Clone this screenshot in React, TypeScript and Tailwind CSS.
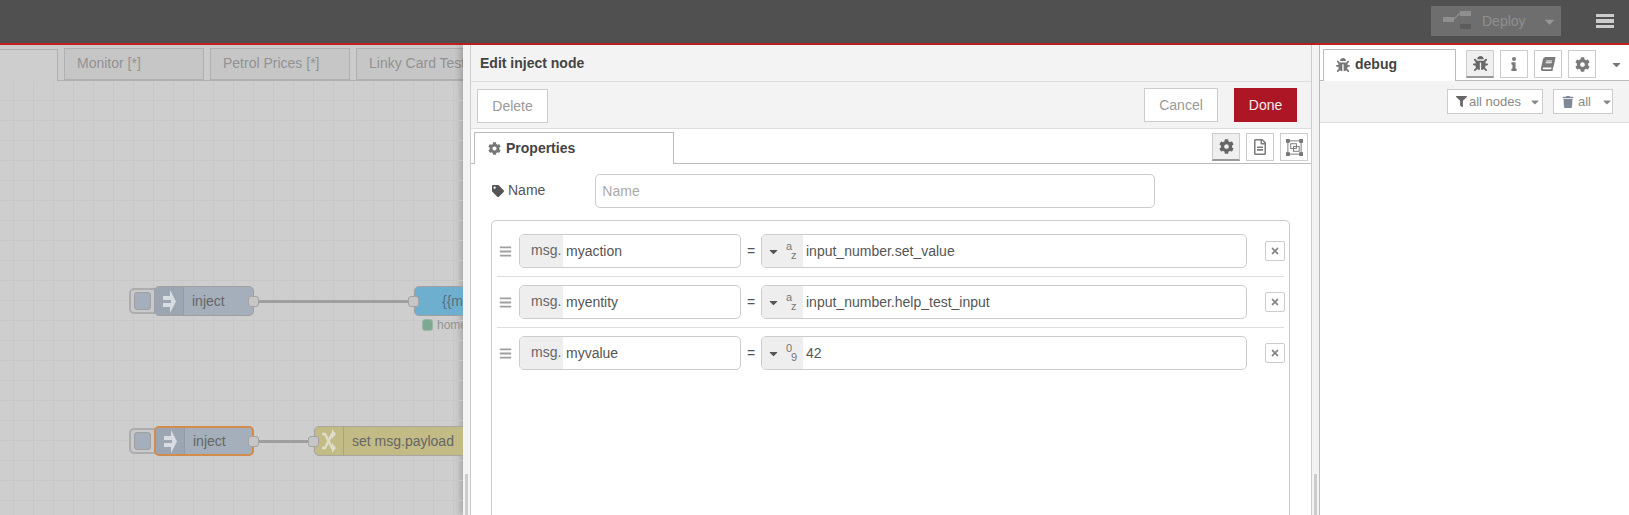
import React from 'react';
import { FaBars, FaBook, FaBug, FaCaretDown, FaCog, FaFilter, FaInfo, FaRegFileAlt, FaTag, FaTimes, FaTrash } from 'react-icons/fa';

const font = "font-['Liberation_Sans',Arial,sans-serif]";

const InjectIcon = () => (
  <svg viewBox="0 0 13 23" className="w-[13px] h-[23px]" fill="#d9dde1">
    <path d="M0 6H7V0L13 11.5 7 23V17H0V13H8V10H0Z" />
  </svg>
);

const SwapIcon = () => (
  <svg viewBox="0 0 14 24" className="w-[14px] h-[24px]" fill="#dedccb">
    <path d="M0 5h3l7 14h2M0 19h3l7-14h2" stroke="#dedccb" strokeWidth="2.4" fill="none" />
    <path d="M10 0l4 5-4 5zM10 14l4 5-4 5z" />
  </svg>
);

const GroupIcon = () => (
  <svg viewBox="0 0 18 18" className="w-[17px] h-[17px]" fill="none" stroke="#777777" strokeWidth="1">
    <rect x="2" y="2" width="14" height="14" />
    <rect x="5" y="5" width="6" height="5" />
    <rect x="8" y="8" width="6" height="5" />
    <rect x="0.5" y="0.5" width="3" height="3" fill="#777777" />
    <rect x="14.5" y="0.5" width="3" height="3" fill="#777777" />
    <rect x="0.5" y="14.5" width="3" height="3" fill="#777777" />
    <rect x="14.5" y="14.5" width="3" height="3" fill="#777777" />
  </svg>
);

const CanvasTab = ({ label }: { label: string }) => (
  <div className="w-[140px] h-[32px] ml-[6px] bg-[#c6c6c6] border border-[#b0b0b0] pl-[12px] leading-[29px] text-[14px] text-[#929292] whitespace-nowrap overflow-hidden shrink-0">
    {label}
  </div>
);

const Port = ({ className }: { className: string }) => (
  <div className={`absolute w-[11px] h-[11px] bg-[#c6c6c6] border border-[#a3a3a3] rounded-[3px] ${className}`} />
);

const Wire = ({ className }: { className: string }) => (
  <div className={`absolute h-[3px] bg-[#9f9f9f] ${className}`} />
);

const InjectNode = ({ top, selected }: { top: string; selected?: boolean }) => (
  <div className={`absolute left-[129px] ${top} w-[130px] h-[30px]`}>
    <div className="absolute left-0 top-[2px] w-[30px] h-[26px] bg-[#c9c9c9] border-2 border-[#adadad] rounded-[5px] pl-[3px] pt-[2px]">
      <div className="w-[17px] h-[18px] bg-[#a4afbb] border border-[#a0a0a0] rounded-[3px]" />
    </div>
    <div className={`absolute left-[25px] top-0 w-[100px] h-[30px] bg-[#a4afbb] rounded-[5px] flex items-center ${selected ? 'border-2 border-[#d18b4b]' : 'border border-[#a0a0a0]'}`}>
      <div className="w-[29px] h-full bg-[#9ca6b2] border-r border-[#929ba6] rounded-l-[4px] flex items-center justify-center shrink-0">
        <InjectIcon />
      </div>
      <span className="ml-[8px] text-[14px] text-[#666666]">inject</span>
    </div>
    <Port className="left-[119px] top-[10px]" />
  </div>
);

const Canvas = () => (
  <div className="w-[463px] shrink-0 h-full flex flex-col overflow-hidden bg-[#cecece]">
    <div className="h-[36px] shrink-0 flex items-end border-b border-[#b0b0b0] bg-[#cbcbcb]">
      <div className="w-[58px] h-[32px] -mb-px bg-[#cecece] border-t border-r border-[#b0b0b0] shrink-0" />
      <CanvasTab label="Monitor [*]" />
      <CanvasTab label="Petrol Prices [*]" />
      <CanvasTab label="Linky Card Test" />
    </div>
    <div className="relative flex-1 bg-[linear-gradient(to_right,#c7c7c7_1px,transparent_1px),linear-gradient(to_bottom,#c7c7c7_1px,transparent_1px)] bg-[size:20px_20px] bg-[position:13px_19px]">
      <Wire className="left-[259px] top-[219px] w-[155px]" />
      <Wire className="left-[259px] top-[359px] w-[55px]" />
      <InjectNode top="top-[205px]" />
      <InjectNode top="top-[345px]" selected />
      <div className="absolute left-[414px] top-[205px] w-[100px] h-[30px] bg-[#6eafd0] border border-[#a0a0a0] rounded-[5px] pl-[27px] leading-[28px] text-[14px] text-[#55707f]">
        {'{{msg'}
      </div>
      <Port className="left-[408px] top-[215px]" />
      <div className="absolute left-[422px] top-[238px] w-[11px] h-[12px] bg-[#7fa893] border border-[#9bb9a9] rounded-[3px]" />
      <span className="absolute left-[437px] top-[236px] text-[12px] leading-[16px] text-[#929292]">home</span>
      <div className="absolute left-[314px] top-[345px] w-[200px] h-[30px] bg-[#c2bb85] border border-[#a8a8a0] rounded-[5px] flex items-center">
        <div className="w-[29px] h-full border-r border-[#aaa474] flex items-center justify-center shrink-0">
          <SwapIcon />
        </div>
        <span className="ml-[8px] text-[14px] text-[#666666] whitespace-nowrap">set msg.payload</span>
      </div>
      <Port className="left-[308px] top-[355px]" />
    </div>
  </div>
);

const ToolButton = ({ active, children }: { active?: boolean; children: React.ReactNode }) => (
  <div className={`w-[28px] h-[28px] border flex items-center justify-center text-[#7a7a7a] text-[14px] shrink-0 ${active ? 'bg-[#efefef] border-[#cccccc] border-b-[#999999] border-b-2 text-[#666666]' : 'bg-white border-[#cccccc]'}`}>
    {children}
  </div>
);

const PropertyRow = ({ name, type, value, last }: { name: string; type: 'str' | 'num'; value: string; last?: boolean }) => (
  <div className={`mx-[5px] py-[8px] flex items-center ${last ? '' : 'border-b border-[#dddddd]'}`}>
    <FaBars className="ml-[2px] mr-[7px] w-[13px] text-[13px] text-[#a0a0a0] shrink-0" />
    <div className="w-[222px] h-[34px] border border-[#cccccc] rounded-[5px] flex overflow-hidden shrink-0">
      <div className="w-[43px] bg-[#eeeeee] pl-[11px] leading-[30px] text-[14px] text-[#666666]">msg.</div>
      <div className="pl-[3px] leading-[33px] text-[14px] text-[#555555]">{name}</div>
    </div>
    <div className="w-[20px] text-center text-[14px] text-[#555555] shrink-0">=</div>
    <div className="w-[486px] h-[34px] border border-[#cccccc] rounded-[5px] flex overflow-hidden shrink-0">
      <div className="w-[41px] bg-[#eeeeee] flex items-center pl-[5px] shrink-0">
        <FaCaretDown className="text-[13px] text-[#555555]" />
        <div className="ml-[6px] w-[12px] text-[11px] leading-[9px] text-[#777777]">
          <div>{type === 'str' ? 'a' : '0'}</div>
          <div className="pl-[5px]">{type === 'str' ? 'z' : '9'}</div>
        </div>
      </div>
      <div className="pl-[3px] leading-[33px] text-[14px] text-[#555555]">{value}</div>
    </div>
    <div className="ml-[18px] w-[20px] h-[20px] border border-[#cccccc] rounded-[2px] flex items-center justify-center shrink-0">
      <FaTimes className="text-[10px] text-[#888888]" />
    </div>
  </div>
);

const EditTray = () => (
  <div className="w-[856px] shrink-0 h-full flex bg-[#f3f3f3] shadow-[-3px_0_6px_rgba(0,0,0,0.18)]">
    <div className="w-[7px] shrink-0 flex flex-col justify-end items-center">
      <div className="w-[3px] h-[41px] bg-[#cccccc]" />
    </div>
    <div className="flex-1 min-w-0 border-x border-[#cccccc] flex flex-col">
      <div className="h-[37px] shrink-0 border-b border-[#dddddd] pl-[9px] leading-[36px] text-[14px] font-bold text-[#444444]">
        Edit inject node
      </div>
      <div className="h-[47px] shrink-0 border-b border-[#dddddd] flex items-start pl-[6px] pr-[14px] pt-[6px]">
        <div className="mt-px w-[71px] h-[34px] bg-white border border-[#cccccc] text-center leading-[32px] text-[14px] text-[#999999]">Delete</div>
        <div className="ml-auto w-[74px] h-[34px] bg-white border border-[#cccccc] text-center leading-[32px] text-[14px] text-[#999999]">Cancel</div>
        <div className="ml-[16px] w-[63px] h-[34px] bg-[#ad1625] text-center leading-[34px] text-[14px] text-[#eeeeee]">Done</div>
      </div>
      <div className="flex-1 min-h-0 bg-white flex flex-col overflow-hidden">
        <div className="h-[35px] shrink-0 border-b border-[#bbbbbb] flex items-start pl-[3px] pr-[3px]">
          <div className="mt-[3px] w-[200px] h-[32px] bg-white border border-b-0 border-[#bbbbbb] pl-[13px] flex items-center gap-[5px] text-[14px] font-bold text-[#444444]">
            <FaCog className="text-[13px] text-[#777777]" />
            Properties
          </div>
          <div className="ml-auto mt-[4px] flex gap-[6px]">
            <ToolButton active><FaCog className="text-[15px]" /></ToolButton>
            <ToolButton><FaRegFileAlt className="text-[16px]" /></ToolButton>
            <ToolButton><GroupIcon /></ToolButton>
          </div>
        </div>
        <div className="pl-[20px] pr-[21px] pt-[10px]">
          <div className="flex items-center h-[34px]">
            <FaTag className="text-[12px] text-[#555555] ml-px" />
            <span className="ml-[4px] text-[14px] text-[#555555] -mt-[2px]">Name</span>
            <div className="ml-[50px] w-[560px] h-[34px] border border-[#cccccc] rounded-[5px] bg-white pl-[6px] leading-[33px] text-[14px] text-[#aaaaaa]">Name</div>
          </div>
          <div className="mt-[12px] h-[400px] border border-[#cccccc] rounded-[5px] pt-[5px]">
            <PropertyRow name="myaction" type="str" value="input_number.set_value" />
            <PropertyRow name="myentity" type="str" value="input_number.help_test_input" />
            <PropertyRow name="myvalue" type="num" value="42" last />
          </div>
        </div>
      </div>
    </div>
    <div className="w-[7px] shrink-0 flex flex-col justify-end items-center">
      <div className="w-[3px] h-[41px] bg-[#cccccc]" />
    </div>
  </div>
);

const Sidebar = () => (
  <div className="flex-1 min-w-0 h-full border-l border-[#bbbbbb] bg-white flex flex-col">
    <div className="h-[36px] shrink-0 border-b border-[#bbbbbb] flex items-start pl-[3px]">
      <div className="mt-[4px] w-[133px] h-[32px] bg-white border border-b-0 border-[#bbbbbb] pl-[12px] pb-[2px] flex items-center gap-[5px] text-[14px] font-bold text-[#444444] shrink-0">
        <FaBug className="text-[14px] text-[#777777]" />
        debug
      </div>
      <div className="ml-[10px] mt-[5px] flex gap-[6px]">
        <ToolButton active><FaBug className="text-[15px]" /></ToolButton>
        <ToolButton><FaInfo /></ToolButton>
        <ToolButton><FaBook className="-skew-x-12" /></ToolButton>
        <ToolButton><FaCog className="text-[15px]" /></ToolButton>
      </div>
      <FaCaretDown className="ml-[14px] mt-[13px] text-[13px] text-[#777777]" />
    </div>
    <div className="h-[42px] shrink-0 bg-[#f3f3f3] border-b border-[#dddddd] flex justify-end items-start pr-[16px] pt-[8px] gap-[10px]">
      <div className="w-[96px] h-[25px] bg-white border border-[#cccccc] flex items-center pl-[8px] text-[13px] text-[#888888] whitespace-nowrap">
        <FaFilter className="text-[11px] text-[#666666] mr-[2px] shrink-0" />
        all nodes
        <FaCaretDown className="ml-[8px] text-[12px] text-[#888888] shrink-0" />
      </div>
      <div className="w-[60px] h-[25px] bg-white border border-[#cccccc] flex items-center pl-[8px] text-[13px] text-[#888888] whitespace-nowrap">
        <FaTrash className="text-[12px] text-[#808a94] mr-[4px] shrink-0" />
        all
        <FaCaretDown className="ml-[10px] text-[12px] text-[#888888] shrink-0" />
      </div>
    </div>
    <div className="flex-1" />
  </div>
);

export default function App() {
  return (
    <div className={`w-[1629px] h-[515px] overflow-hidden flex flex-col ${font}`}>
      <header className="h-[45px] shrink-0 bg-[#505050] border-b-2 border-[#c3201f] flex items-center justify-end">
        <div className="w-[130px] h-[30px] -mt-[1px] bg-[#6e6e6e] flex items-center">
          <svg viewBox="0 0 28 20" className="ml-[12px] w-[28px] h-[20px] shrink-0">
            <rect x="0" y="6" width="11" height="5" fill="#8f8f8f" />
            <path d="M10 9l7-7" stroke="#8f8f8f" strokeWidth="1.3" fill="none" />
            <rect x="17" y="0" width="11" height="5" fill="#8f8f8f" />
            <rect x="17" y="13" width="11" height="5" fill="#5c5c5c" />
          </svg>
          <span className="ml-[11px] text-[14px] text-[#8e8e8e]">Deploy</span>
          <FaCaretDown className="ml-[16px] text-[15px] text-[#969696]" />
        </div>
        <div className="ml-[35px] mr-[15px] w-[18px] flex flex-col gap-[2px] -mt-[1px]">
          <div className="h-[3.5px] bg-[#cccccc]" />
          <div className="h-[3.5px] bg-[#cccccc]" />
          <div className="h-[3.5px] bg-[#cccccc]" />
        </div>
      </header>
      <div className="flex-1 min-h-0 flex">
        <Canvas />
        <EditTray />
        <Sidebar />
      </div>
    </div>
  );
}
